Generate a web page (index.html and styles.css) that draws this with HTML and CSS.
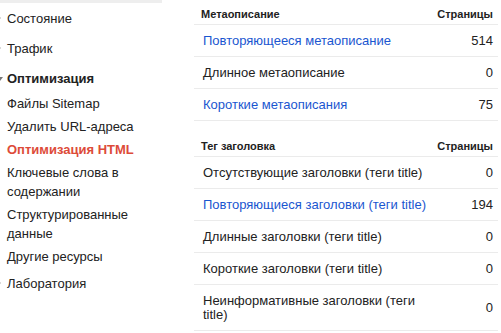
FILE: index.html
```html
<!DOCTYPE html>
<html lang="ru">
<head>
  <meta charset="UTF-8">
  <title>Оптимизация HTML</title>
  <link rel="stylesheet" href="styles.css">
</head>
<body>
  <div class="page">
    <nav class="sidebar">
      <ul class="menu">
        <li class="top">Состояние</li>
        <li class="top">Трафик</li>
        <li class="top open">Оптимизация</li>
        <li class="sub">Файлы Sitemap</li>
        <li class="sub">Удалить URL-адреса</li>
        <li class="sub active">Оптимизация HTML</li>
        <li class="sub">Ключевые слова в содержании</li>
        <li class="sub">Структурированные данные</li>
        <li class="sub">Другие ресурсы</li>
        <li class="top last">Лаборатория</li>
      </ul>
    </nav>

    <main class="content">
      <table class="report">
        <thead>
          <tr><th class="name">Метаописание</th><th class="num">Страницы</th></tr>
        </thead>
        <tbody>
          <tr><td><a href="#">Повторяющееся метаописание</a></td><td class="num">514</td></tr>
          <tr><td>Длинное метаописание</td><td class="num">0</td></tr>
          <tr><td><a href="#">Короткие метаописания</a></td><td class="num">75</td></tr>
        </tbody>
      </table>

      <table class="report second">
        <thead>
          <tr><th class="name">Тег заголовка</th><th class="num">Страницы</th></tr>
        </thead>
        <tbody>
          <tr><td>Отсутствующие заголовки (теги title)</td><td class="num">0</td></tr>
          <tr><td><a href="#">Повторяющиеся заголовки (теги title)</a></td><td class="num">194</td></tr>
          <tr><td>Длинные заголовки (теги title)</td><td class="num">0</td></tr>
          <tr><td>Короткие заголовки (теги title)</td><td class="num">0</td></tr>
          <tr><td>Неинформативные заголовки (теги title)</td><td class="num">0</td></tr>
        </tbody>
      </table>
    </main>
  </div>
</body>
</html>
```

FILE: styles.css
```css
* {
  margin: 0;
  padding: 0;
  box-sizing: border-box;
}

body {
  font-family: "Liberation Sans", Arial, sans-serif;
  font-size: 13px;
  color: #222;
  background: #fff;
}

.page {
  display: flex;
  align-items: flex-start;
}

/* Боковое меню */
.sidebar {
  width: 162px;
  flex-shrink: 0;
  border-top: 3px solid #eeeeee;
}

.menu {
  list-style: none;
}

.menu li {
  position: relative;
  padding-left: 7px;
  padding-right: 10px;
  line-height: 19px;
}

.menu .top {
  padding-top: 6px;
  padding-bottom: 5px;
}

.menu .top::before {
  content: "";
  position: absolute;
  left: -3px;
  top: 12px;
  border-left: 4px solid #999;
  border-top: 3px solid transparent;
  border-bottom: 3px solid transparent;
}

.menu .open {
  font-weight: bold;
  padding-bottom: 4px;
}

.menu .open::before {
  left: -3px;
  top: 14px;
  border-top: 4px solid #777;
  border-left: 3px solid transparent;
  border-right: 3px solid transparent;
  border-bottom: none;
}

.menu .last {
  padding-top: 6px;
}

.menu .sub {
  padding-top: 2px;
  padding-bottom: 2px;
}

.menu .active {
  color: #dd4b39;
  font-weight: bold;
}

/* Таблицы */
.content {
  margin-left: 32px;
  width: 304px;
}

.report {
  width: 100%;
  border-collapse: collapse;
  table-layout: fixed;
}

.report.second {
  margin-top: 11px;
}

.report th {
  font-size: 11px;
  font-weight: bold;
  color: #222;
  text-align: left;
  line-height: 14px;
  padding: 7px 4px 3px 7px;
  border-bottom: 1px solid #ebebeb;
  white-space: nowrap;
}

.report td {
  line-height: 14px;
  padding: 9px 4px 8px 9px;
  border-bottom: 1px solid #ebebeb;
  vertical-align: middle;
}

.report .num {
  width: 62px;
  padding-right: 5px;
  text-align: right;
}

.report th.num {
  padding-left: 0;
}

.report a {
  color: #1a56d0;
  text-decoration: none;
}
```
